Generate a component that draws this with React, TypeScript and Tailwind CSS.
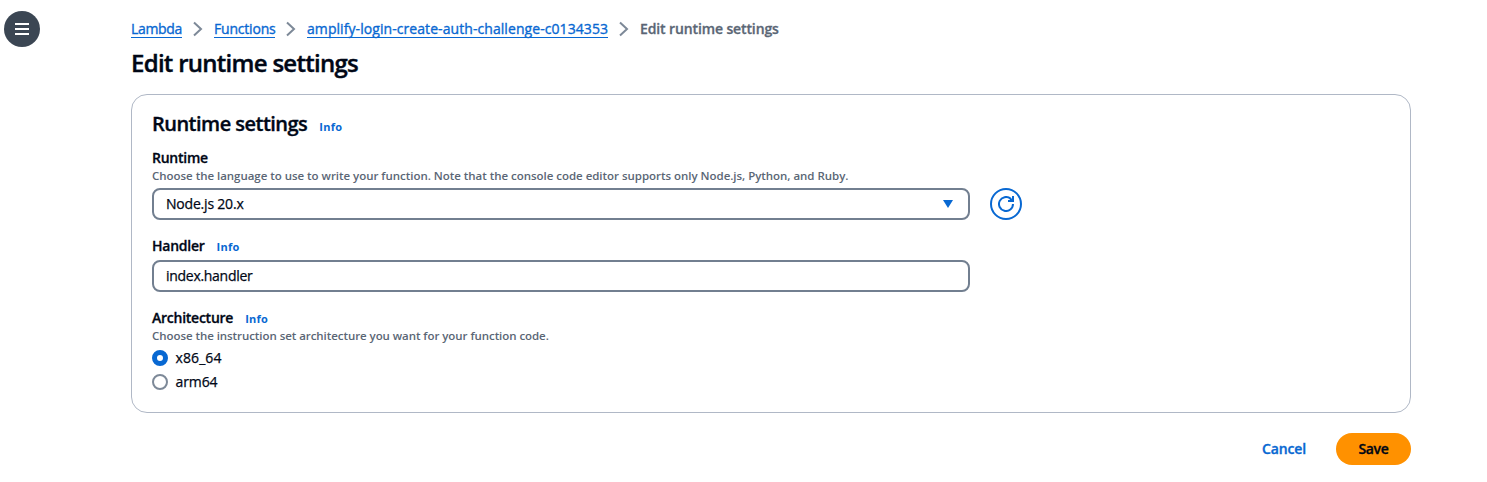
import React from "react";

function Info() {
  return <a href="#" className="text-[11px] leading-4 font-bold tracking-[0.25px] text-[#0868d2]">Info</a>;
}

function Chevron() {
  return (
    <svg className="mr-[9px] ml-[10px] h-4 w-[13px] shrink-0" viewBox="0 0 13 16" fill="none" stroke="#7d8998" strokeWidth="2">
      <path d="M2 1.5 9 8l-7 6.5" />
    </svg>
  );
}

const crumb = "h-[18px] border-b border-[#0868d2] text-[#0868d2] leading-[18px] whitespace-nowrap [-webkit-text-stroke:0.35px]";
const label = "font-semibold tracking-[-0.25px] [-webkit-text-stroke:0.3px]";
const hint = "text-[11.5px] leading-4 font-semibold text-[#5a6675] whitespace-nowrap";
const value = "[-webkit-text-stroke:0.25px]";

export default function App() {
  return (
    <div className="flex h-[482px] w-[1487px] bg-white font-['Open_Sans','Noto_Sans',sans-serif] text-[14px] leading-5 text-[#000716]">
      <aside className="w-[131px] shrink-0 pt-[11px] pl-1">
        <button aria-label="Open navigation" className="flex size-9 items-center justify-center rounded-full bg-[#3b4653]">
          <svg width="16" height="16" viewBox="0 0 16 16" stroke="#fff" strokeWidth="2">
            <path d="M1 3h14M1 8h14M1 13h14" />
          </svg>
        </button>
      </aside>
      <main className="flex w-[1280px] flex-col">
        <nav className="mt-5 flex h-[18px] items-center">
          <a href="#" className={`${crumb} w-[51px] tracking-[-0.35px]`}>Lambda</a>
          <Chevron />
          <a href="#" className={`${crumb} w-[61px] tracking-[-0.2px]`}>Functions</a>
          <Chevron />
          <a href="#" className={`${crumb} w-[301px] tracking-[0.07px]`}>amplify-login-create-auth-challenge-c0134353</a>
          <Chevron />
          <span className="font-semibold tracking-[-0.12px] text-[#5a6675] [-webkit-text-stroke:0.3px]">Edit runtime settings</span>
        </nav>
        <h1 className="mt-[10px] text-[24px] leading-[30px] font-semibold tracking-[-0.72px] [-webkit-text-stroke:0.4px]">Edit runtime settings</h1>
        <section className="mt-4 h-[319px] rounded-2xl border border-[#b0b8c6] pt-[17px] pl-5">
          <div className="flex items-baseline gap-3">
            <h2 className="text-[20px] leading-6 font-semibold tracking-[-0.52px] [-webkit-text-stroke:0.35px]">Runtime settings</h2>
            <Info />
          </div>
          <div className={`${label} mt-3`}>Runtime</div>
          <p className={`${hint} tracking-[-0.03px]`}>Choose the language to use to write your function. Note that the console code editor supports only Node.js, Python, and Ruby.</p>
          <div className="mt-1 flex items-center gap-5">
            <button className="flex h-8 w-[818px] items-center justify-between rounded-lg border-2 border-[#727f90] pr-[14px] pl-3">
              <span className={`${value} tracking-[-0.2px]`}>Node.js 20.x</span>
              <svg width="12" height="10" viewBox="0 0 12 10"><path d="M1 1h10L6 9z" fill="#0868d2" /></svg>
            </button>
            <button aria-label="Refresh" className="flex size-8 items-center justify-center rounded-full border-2 border-[#0868d2]">
              <svg width="16" height="16" viewBox="0 0 16 16" fill="none" stroke="#0868d2" strokeWidth="2">
                <path d="M15 8a7 7 0 1 1-2.5-5.36L14 5" />
                <path d="M15 0v5h-5" />
              </svg>
            </button>
          </div>
          <div className="mt-4 flex items-baseline gap-3"><span className={label}>Handler</span><Info /></div>
          <input defaultValue="index.handler" className={`${value} mt-1 block h-8 w-[818px] rounded-lg border-2 border-[#727f90] pb-0.5 pl-3 tracking-[-0.29px]`} />
          <div className="mt-4 flex items-baseline gap-3"><span className={label}>Architecture</span><Info /></div>
          <p className={`${hint} tracking-[-0.06px]`}>Choose the instruction set architecture you want for your function code.</p>
          <label className={`${value} mt-1 flex items-center gap-[7.5px] tracking-[0.1px]`}><span className="size-4 rounded-full border-[5px] border-[#0868d2]" />x86_64</label>
          <label className={`${value} mt-1 flex items-center gap-[7.5px] tracking-[-0.1px]`}><span className="size-4 rounded-full border-2 border-[#7d8998]" />arm64</label>
        </section>
        <div className="mt-5 flex justify-end gap-[30px] font-semibold tracking-[-0.15px] [-webkit-text-stroke:0.35px]">
          <button className="text-[#0868d2]">Cancel</button>
          <button className="h-8 w-[75px] rounded-full bg-[#ff9100] tracking-[-0.3px]">Save</button>
        </div>
      </main>
    </div>
  );
}
